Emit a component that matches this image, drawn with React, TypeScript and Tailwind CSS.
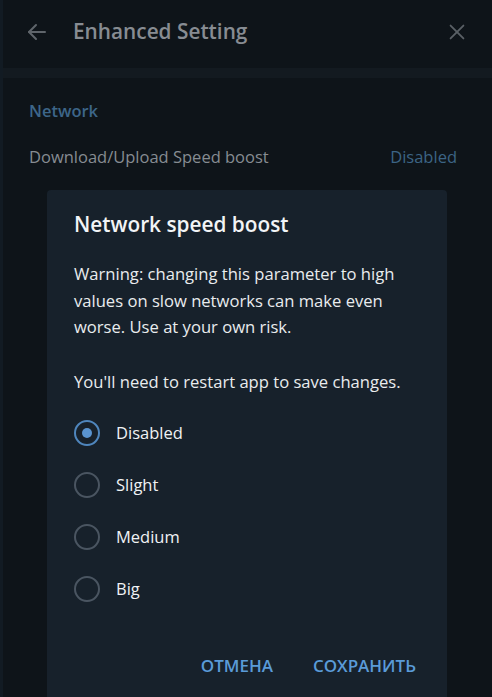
import { useState } from "react";

const OPTIONS = ["Disabled", "Slight", "Medium", "Big"];

export default function App() {
    const [value, setValue] = useState("Disabled");

    return (
        <div className="w-[492px] h-[697px] overflow-hidden bg-[#0e1419] flex font-['Open_Sans',sans-serif]">
            {/* edge of the window underneath */}
            <div className="w-[3px] shrink-0 bg-[#121b23]" />

            <div className="flex-1 flex flex-col">
                {/* Header */}
                <div className="h-[68px] shrink-0 flex items-center pl-[22px] pr-[24px] pb-[4px]">
                    <svg width="24" height="24" viewBox="0 0 24 24" fill="none" stroke="#5f656b" strokeWidth="2" strokeLinecap="round" strokeLinejoin="round">
                        <path d="M20 12H4" />
                        <path d="M11 5l-7 7 7 7" />
                    </svg>
                    <h1 className="ml-[24px] text-[20.8px] font-semibold text-[#878c92]">Enhanced Setting</h1>
                    <svg className="ml-auto" width="22" height="22" viewBox="0 0 24 24" fill="none" stroke="#5a6066" strokeWidth="2" strokeLinecap="round">
                        <path d="M5 5l14 14" />
                        <path d="M19 5L5 19" />
                    </svg>
                </div>
                <div className="h-[10px] shrink-0 bg-[#131a20]" />

                {/* Content */}
                <div className="flex-1 relative px-[26px] pt-[21px]">
                    <div className="text-[16.5px] font-semibold text-[#3d6689] leading-[24px]">Network</div>
                    <div className="mt-[22px] flex items-center justify-between text-[16.5px] leading-[24px]">
                        <span className="text-[#868c92]">Download/Upload Speed boost</span>
                        <span className="text-[#3c6485] pr-[9px]">Disabled</span>
                    </div>

                    {/* Dialog */}
                    <div className="absolute left-[44px] top-[112px] w-[400px] h-[560px] bg-[#17212b] rounded-[4px] pl-[27px] pr-[20px] pt-[20px]">
                        <h2 className="text-[20.8px] font-semibold text-[#f2f4f6] leading-[28px]">Network speed boost</h2>
                        <p className="mt-[23px] text-[16.6px] leading-[26.5px] text-[#e9ecee]">
                            Warning: changing this parameter to high values on slow networks can make even worse. Use at your own risk.
                        </p>
                        <p className="mt-[28px] text-[16.6px] leading-[26.5px] text-[#e9ecee]">
                            You'll need to restart app to save changes.
                        </p>

                        <div className="mt-[12px] flex flex-col">
                            {OPTIONS.map(opt => {
                                const active = opt === value;
                                return (
                                    <button
                                        key={opt}
                                        onClick={() => setValue(opt)}
                                        className="h-[52px] flex items-center text-left"
                                    >
                                        <span className={`w-[26px] h-[26px] rounded-full border-2 flex items-center justify-center shrink-0 ${active ? "border-[#4f86bd]" : "border-[#4a5561]"}`}>
                                            {active && <span className="w-[10px] h-[10px] rounded-full bg-[#5a94d0]" />}
                                        </span>
                                        <span className="ml-[16px] text-[16.5px] text-[#f0f2f4]">{opt}</span>
                                    </button>
                                );
                            })}
                        </div>

                        <div className="mt-[38px] flex justify-end gap-[40px] pr-[11px]">
                            <button className="text-[17px] font-semibold text-[#5a9bd8] uppercase">Отмена</button>
                            <button className="text-[17px] font-semibold text-[#5a9bd8] uppercase">Сохранить</button>
                        </div>
                    </div>
                </div>
            </div>
        </div>
    );
}
